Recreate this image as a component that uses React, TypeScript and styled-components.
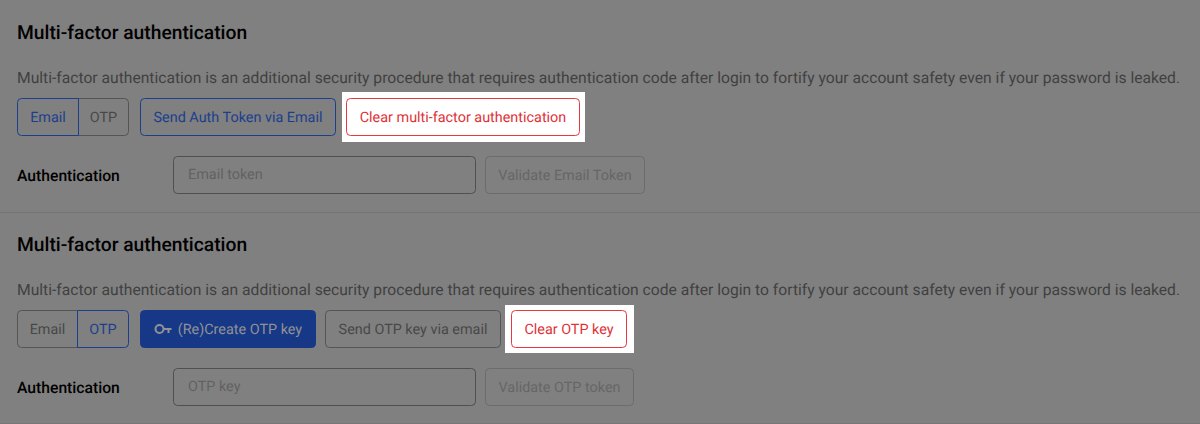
import React from "react";
import styled, { createGlobalStyle, css } from "styled-components";

const GlobalStyle = createGlobalStyle`
  *, *::before, *::after { box-sizing: border-box; }
  body {
    margin: 0;
    background: #808080;
    font-family: Roboto, "Liberation Sans", sans-serif;
    text-rendering: geometricPrecision;
    overflow: hidden;
  }
`;

const Section = styled.section`
  height: 212px;
  padding: 22px 17px 0;
  & + & {
    padding-top: 21px;
    border-top: 1px solid #747474;
    border-bottom: 1px solid #777;
  }
`;

const Title = styled.h2`
  margin: 0;
  height: 22px;
  font-size: 19.25px;
  line-height: 22px;
  font-weight: 500;
  color: #000;
`;

const Description = styled.p`
  margin: 22px 0 0;
  height: 22px;
  font-size: 15.65px;
  line-height: 23px;
  white-space: nowrap;
  color: #414141;
`;

const Actions = styled.div`
  display: flex;
  align-items: flex-start;
  height: 38px;
  margin-top: 10px;
`;

type Tone = "active" | "plain" | "danger" | "disabled" | "primary";

const tones = {
  active: css`color: #1b3f8d; border-color: #1b3f8d;`,
  plain: css`color: #484848; border-color: #555;`,
  danger: css`color: #e03237; border-color: #e5393e; background: #fff;`,
  disabled: css`color: #666; border-color: #6c6c6c;`,
  primary: css`color: #909296; border-color: #173886; background: #173886;`,
};

const Button = styled.button<{ $tone: Tone; $width: number }>`
  display: flex;
  flex: none;
  align-items: center;
  justify-content: center;
  width: ${(p) => p.$width}px;
  height: 38px;
  padding: 2px 0 0;
  border: 1px solid;
  border-radius: 4.5px;
  background: transparent;
  font: 400 14.4px/20px Roboto, "Liberation Sans", sans-serif;
  text-rendering: inherit;
  white-space: nowrap;
  ${(p) => tones[p.$tone]}
`;

const Segments = styled.div`
  display: flex;
  width: 112px;
  margin-right: 11px;
`;

const Segment = styled(Button)`
  position: relative;
  z-index: ${(p) => (p.$tone === "active" ? 1 : 0)};
  &:first-child { border-radius: 4.5px 0 0 4.5px; }
  &:last-child { border-radius: 0 4.5px 4.5px 0; margin-left: -1px; }
`;

const SecondaryButton = styled(Button)`
  margin-left: 9px;
`;

const Spotlight = styled.div<{ $pad: string; $offset: string }>`
  display: flex;
  flex: none;
  padding: ${(p) => p.$pad};
  margin: ${(p) => p.$offset};
  background: #fff;
`;

const Field = styled.div`
  display: flex;
  align-items: center;
  height: 38px;
  margin-top: 20px;
`;

const Label = styled.label`
  width: 156px;
  padding-top: 1px;
  font-size: 15.7px;
  line-height: 20px;
  font-weight: 500;
  color: #000;
`;

const Input = styled.input`
  width: 303px;
  height: 38px;
  margin-right: 9px;
  padding: 0 14px 2px;
  border: 1px solid #505050;
  border-radius: 4.5px;
  background: transparent;
  outline: none;
  font: 400 14.4px/20px Roboto, "Liberation Sans", sans-serif;
  text-rendering: inherit;
  &::placeholder { color: #626262; opacity: 1; }
`;

const Key = styled.svg`
  width: 18px;
  height: 12px;
  margin: -2px 6px 0 0;
  fill: none;
  stroke: currentColor;
  stroke-width: 2;
`;

const description =
  "Multi-factor authentication is an additional security procedure that requires authentication code after login to fortify your account safety even if your password is leaked.";

function Intro() {
  return (
    <>
      <Title>Multi-factor authentication</Title>
      <Description>{description}</Description>
    </>
  );
}

export default function App() {
  return (
    <main>
      <GlobalStyle />
      <Section>
        <Intro />
        <Actions>
          <Segments>
            <Segment $tone="active" $width={62}>Email</Segment>
            <Segment $tone="plain" $width={51}>OTP</Segment>
          </Segments>
          <Button $tone="active" $width={196}>Send Auth Token via Email</Button>
          <Spotlight $pad="6px 5px 6px 4px" $offset="-6px 0 0 6px">
            <Button $tone="danger" $width={234}>Clear multi-factor authentication</Button>
          </Spotlight>
        </Actions>
        <Field>
          <Label htmlFor="email-token">Authentication</Label>
          <Input id="email-token" placeholder="Email token" />
          <Button $tone="disabled" $width={160}>Validate Email Token</Button>
        </Field>
      </Section>
      <Section>
        <Intro />
        <Actions>
          <Segments>
            <Segment $tone="plain" $width={61}>Email</Segment>
            <Segment $tone="active" $width={52}>OTP</Segment>
          </Segments>
          <Button $tone="primary" $width={176}>
            <Key viewBox="0 0 18 12" aria-hidden="true">
              <circle cx="5.5" cy="6" r="4" />
              <path d="M9.5 6H17.5M14.5 6V10" />
            </Key>
            (Re)Create OTP key
          </Button>
          <SecondaryButton $tone="plain" $width={176}>Send OTP key via email</SecondaryButton>
          <Spotlight $pad="5px 7px 5px 6px" $offset="-5px 0 0 4px">
            <Button $tone="danger" $width={116}>Clear OTP key</Button>
          </Spotlight>
        </Actions>
        <Field>
          <Label htmlFor="otp-key">Authentication</Label>
          <Input id="otp-key" placeholder="OTP key" />
          <Button $tone="disabled" $width={149}>Validate OTP token</Button>
        </Field>
      </Section>
    </main>
  );
}
